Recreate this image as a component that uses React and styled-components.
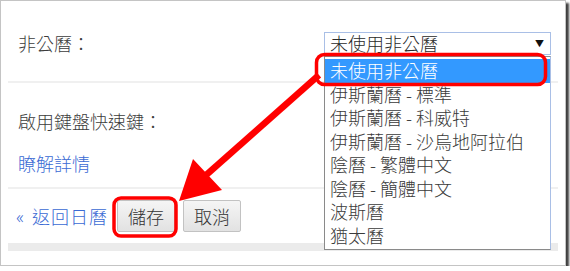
import React from "react";
import styled, { createGlobalStyle } from "styled-components";

const options = [
  "未使用非公曆",
  "伊斯蘭曆 - 標準",
  "伊斯蘭曆 - 科威特",
  "伊斯蘭曆 - 沙烏地阿拉伯",
  "陰曆 - 繁體中文",
  "陰曆 - 簡體中文",
  "波斯曆",
  "猶太曆"
];

export default function App() {
  return (
    <>
      <GlobalStyle />
      <Frame>
        <Content>
          <SettingRow>
            <Label>非公曆：</Label>
            <SelectBox>
              <span>未使用非公曆</span>
              <Caret>▼</Caret>
            </SelectBox>
          </SettingRow>
          <Divider />
          <KeyboardRow>
            <Label>啟用鍵盤快速鍵：</Label>
            <TextLink href="#">瞭解詳情</TextLink>
          </KeyboardRow>
          <Divider />
          <Footer>
            <BackLink href="#">
              <Chevron>«</Chevron>返回日曆
            </BackLink>
            <Button>儲存</Button>
            <Button>取消</Button>
          </Footer>
          <GrayBar />
        </Content>

        <DropList>
          {options.map((item, i) => (
            <Option key={item} selected={i === 0}>
              {item}
            </Option>
          ))}
        </DropList>

        <Annotation width="570" height="271" viewBox="0 0 570 271">
          <rect x="316.5" y="54.5" width="229" height="30" rx="8" fill="none" stroke="#f00" strokeWidth="3.5" />
          <rect x="114" y="198" width="62" height="38" rx="7" fill="none" stroke="#f00" strokeWidth="3.5" />
          <line x1="319" y1="75" x2="205" y2="176" stroke="#f00" strokeWidth="6.5" />
          <polygon points="179,201 193,159 222,190" fill="#f00" />
        </Annotation>
      </Frame>
    </>
  );
}

const GlobalStyle = createGlobalStyle`
  html, body {
    margin: 0;
    padding: 0;
    background: #ffffff;
  }
  body {
    font-family: "Noto Sans CJK TC", "Noto Sans", sans-serif;
    font-weight: 300;
  }
`;

const Frame = styled.div`
  position: relative;
  box-sizing: border-box;
  width: 566px;
  height: 266px;
  background: #ffffff;
  border: 1px solid #c4c4c4;
  box-shadow: 3px 3px 2px rgba(0, 0, 0, 0.75);
`;

const Content = styled.div`
  display: flex;
  flex-direction: column;
  padding: 0 7px;
`;

const SettingRow = styled.div`
  display: flex;
  align-items: center;
  height: 80px;
  padding-top: 4px;
  box-sizing: border-box;
`;

const Label = styled.div`
  width: 306px;
  padding-left: 10px;
  font-size: 18px;
  line-height: 24px;
  color: #3c3c3c;
`;

const SelectBox = styled.div`
  box-sizing: border-box;
  width: 227px;
  height: 23px;
  display: flex;
  align-items: center;
  justify-content: space-between;
  padding: 0 6px 0 5px;
  border: 1px solid #a9bfe6;
  font-size: 18px;
  line-height: 21px;
  color: #2a2a2a;
`;

const Caret = styled.span`
  font-size: 9px;
  color: #111111;
`;

const Divider = styled.div`
  height: 2px;
  background: #f0f0f0;
`;

const KeyboardRow = styled.div`
  display: flex;
  flex-direction: column;
  gap: 18px;
  height: 104px;
  padding-top: 26px;
  box-sizing: border-box;
`;

const TextLink = styled.a`
  padding-left: 10px;
  font-size: 18px;
  line-height: 24px;
  color: #3a6ad4;
  text-decoration: none;
`;

const Footer = styled.div`
  display: flex;
  align-items: center;
  gap: 8px;
  height: 54px;
  padding-left: 8px;
`;

const BackLink = styled.a`
  display: flex;
  align-items: center;
  font-size: 18px;
  line-height: 24px;
  letter-spacing: 1px;
  color: #3a6ad4;
  text-decoration: none;
  margin-right: 1px;
`;

const Chevron = styled.span`
  margin-right: 7px;
`;

const Button = styled.button`
  height: 32px;
  padding: 0 10px;
  font-family: "Noto Sans CJK TC", "Noto Sans", sans-serif;
  font-weight: 300;
  font-size: 18px;
  line-height: 24px;
  color: #333333;
  background: linear-gradient(#f5f5f5, #e2e2e2);
  border: 1px solid #c2c2c2;
  border-radius: 2px;
`;

const GrayBar = styled.div`
  height: 8px;
  background: #ebebeb;
`;

const DropList = styled.div`
  position: absolute;
  left: 323px;
  top: 55px;
  box-sizing: border-box;
  width: 227px;
  padding: 2px 0 2px;
  background: #ffffff;
  border: 1px solid #8a8a8a;
  border-right-color: #a9bfe6;
`;

const Option = styled.div`
  height: 23.5px;
  padding-left: 5px;
  font-size: 18px;
  line-height: 23.5px;
  white-space: nowrap;
  color: ${p => (p.selected ? "#ffffff" : "#3a3a3a")};
  background: ${p => (p.selected ? "#3399ff" : "transparent")};
`;

const Annotation = styled.svg`
  position: absolute;
  left: -1px;
  top: -1px;
  pointer-events: none;
`;
